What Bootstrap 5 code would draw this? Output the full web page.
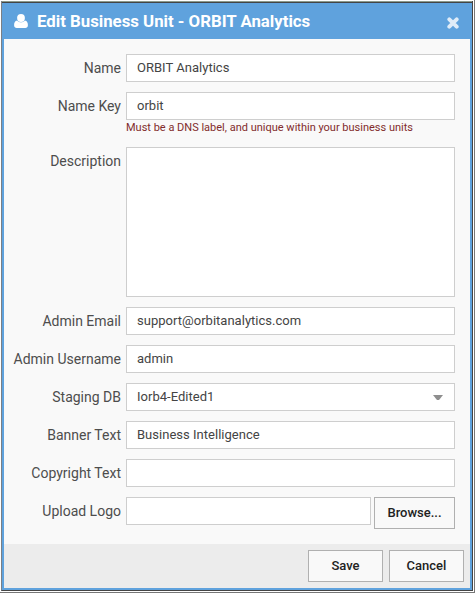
<!DOCTYPE html>
<html lang="en">
<head>
<meta charset="utf-8">
<meta name="viewport" content="width=device-width, initial-scale=1">
<title>Edit Business Unit</title>
<link rel="stylesheet" href="https://cdn.jsdelivr.net/npm/bootstrap@5.3.0/dist/css/bootstrap.min.css">
<style>
body{font-family:Roboto,"Liberation Sans",sans-serif;color:#4d4d4d;width:475px;height:593px;overflow:hidden;background:#fff}
.page-frame{width:475px;height:593px;padding:1px;border-right:1px solid #777;border-bottom:1px solid #777}
.dialog{width:472px;height:590px;border:1px solid #444;border-left-color:#7b7f84;border-top:0;box-shadow:inset 0 1px #8b9a8c,inset 0 2px #444;background:#5fa2dd;padding:2px}
.title-bar{height:36px;color:#fff;padding:0 11px 0 10px}
.title-text{font-size:16.8px;font-weight:700;line-height:36px;margin-left:9px;white-space:nowrap}
.close-btn{background:none;border:0;padding:3px 0 0;line-height:0}
.form-area{background:#f9f9f9;height:505px;padding:15px 15px 0 0}
.field{display:grid;grid-template-columns:117px 329px;column-gap:5px;margin-bottom:10px}
.field label{font-size:14px;line-height:28px;text-align:right;white-space:nowrap}
.field .form-control,.field .form-select{height:28px;min-height:28px;border:1px solid #cecece;border-radius:0;padding:0 10px 1px;font-size:13px;line-height:25px;color:#444;background-color:#fff;letter-spacing:.02px}
.field .form-select{padding-bottom:0;line-height:26px}
.field textarea.form-control{height:150px;resize:none}
.field .form-select{background-image:none;padding-right:30px}
.field .file-name{width:245px;flex:none}
.arrow{position:absolute;right:12px;top:12px}
.hint{font-size:11px;line-height:15px;height:17px;color:#822c2c;white-space:nowrap}
.plain-btn{height:32px;border:1px solid #b0b0b0;border-radius:0;background:#f9f9f9;color:#222;font-size:13px;font-weight:500;line-height:30px;padding:0;width:75px}
.browse{width:81px;flex:none}
.foot{background:#ececec;height:44px;padding:6px 6px 0 0;gap:6px}
</style>
<script src="https://cdn.jsdelivr.net/npm/bootstrap@5.3.0/dist/js/bootstrap.bundle.min.js"></script>
</head>
<body>
<div class="page-frame">
<div class="dialog d-flex flex-column">
  <header class="title-bar d-flex align-items-center">
    <svg width="14" height="14" viewBox="0 0 14 14" fill="#fff"><circle cx="7" cy="4" r="3.9"/><path d="M3.100 6.500C.8 6.800.1 9 .1 11.300.1 13 1.200 14 2.700 14h8.600c1.500 0 2.600-1 2.600-2.700 0-2.300-.7-4.500-3-4.800C9.900 7.700 8.600 8.300 7 8.300S4.100 7.700 3.100 6.500z"/></svg>
    <span class="title-text">Edit Business Unit - ORBIT Analytics</span>
    <button class="close-btn ms-auto" type="button" aria-label="Close"><svg width="12" height="12" viewBox="0 0 12 12"><path d="M2.300 2.300l7.400 7.400M9.700 2.300L2.300 9.700" stroke="#dfecf8" stroke-width="3.900" stroke-linecap="round"/></svg></button>
  </header>
  <main class="form-area">
    <div class="field"><label for="f1">Name</label><input id="f1" class="form-control" value="ORBIT Analytics"></div>
    <div class="field"><label for="f2">Name Key</label><div><input id="f2" class="form-control" value="orbit"><div class="hint">Must be a DNS label, and unique within your business units</div></div></div>
    <div class="field"><label for="f3">Description</label><textarea id="f3" class="form-control"></textarea></div>
    <div class="field"><label for="f4">Admin Email</label><input id="f4" class="form-control" value="support@orbitanalytics.com"></div>
    <div class="field"><label for="f5">Admin Username</label><input id="f5" class="form-control" value="admin"></div>
    <div class="field"><label for="f6">Staging DB</label><div class="position-relative"><select id="f6" class="form-select"><option>Iorb4-Edited1</option></select><svg class="arrow pe-none" width="10" height="5" viewBox="0 0 10 5"><path d="M0 0h10L6 5H4z" fill="#8e8e8e"/></svg></div></div>
    <div class="field"><label for="f7">Banner Text</label><input id="f7" class="form-control" value="Business Intelligence"></div>
    <div class="field"><label for="f8">Copyright Text</label><input id="f8" class="form-control"></div>
    <div class="field mb-0"><label for="f9">Upload Logo</label><div class="d-flex align-items-start"><input id="f9" class="form-control file-name"><button type="button" class="btn plain-btn browse ms-auto">Browse...</button></div></div>
  </main>
  <footer class="foot d-flex justify-content-end">
    <button type="button" class="btn plain-btn">Save</button>
    <button type="button" class="btn plain-btn">Cancel</button>
  </footer>
</div>
</div>
</body>
</html>
